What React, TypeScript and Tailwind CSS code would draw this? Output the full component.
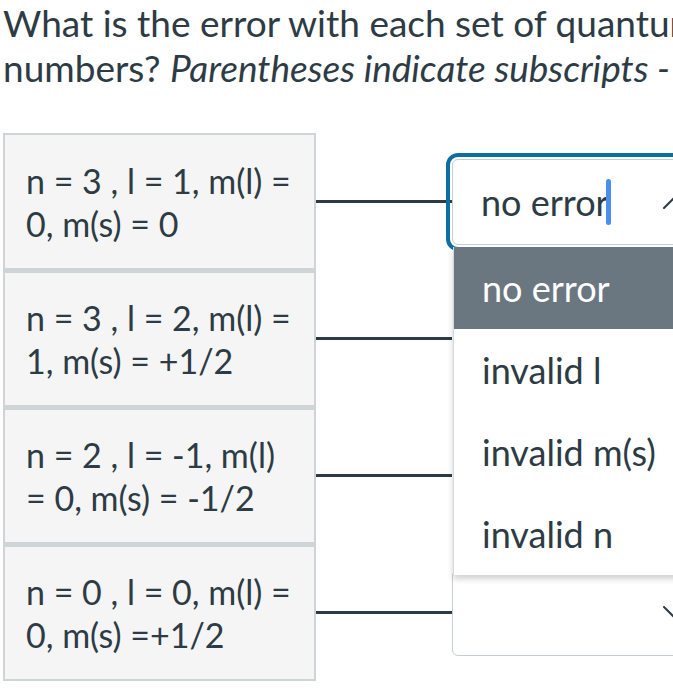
import React from 'react';

type Row = { lines: [string, string]; hasSelect: boolean; focused?: boolean };

const ROWS: Row[] = [
  { lines: ['n = 3 , l = 1, m(l) =', '0, m(s) = 0'], hasSelect: true, focused: true },
  { lines: ['n = 3 , l = 2, m(l) =', '1, m(s) = +1/2'], hasSelect: false },
  { lines: ['n = 2 , l = -1, m(l)', '= 0, m(s) = -1/2'], hasSelect: false },
  { lines: ['n = 0 , l = 0, m(l) =', '0, m(s) =+1/2'], hasSelect: true },
];

const OPTIONS = ['no error', 'invalid l', 'invalid m(s)', 'invalid n'];

const Chevron: React.FC<{ up?: boolean }> = ({ up }) => (
  <svg
    width="24"
    height="14"
    viewBox="0 0 24 14"
    className="absolute left-[210px] top-1/2 -translate-y-1/2"
    fill="none"
    stroke="#2d3b45"
    strokeWidth="2"
    strokeLinecap="round"
  >
    {up ? <path d="M1 13 L12 2 L23 13" /> : <path d="M1 1 L12 12 L23 1" />}
  </svg>
);

const Dropdown: React.FC = () => (
  <div className="absolute left-0 top-[calc(100%+3px)] w-[300px] bg-white border-l border-[#d5d9dc] shadow-[0_4px_6px_rgba(0,0,0,0.18)] z-10">
    {OPTIONS.map((opt, i) => (
      <div
        key={opt}
        className={`h-[82px] flex items-center pl-[28px] text-[36px] ${
          i === 0 ? 'bg-[#6b7780] text-white' : 'text-[#2d3b45]'
        }`}
      >
        {opt}
      </div>
    ))}
  </div>
);

const SelectBox: React.FC<{ focused?: boolean }> = ({ focused }) => (
  <div
    className={`relative w-[300px] h-[86px] bg-white border border-[#c7cdd1] rounded-[6px] flex items-center pl-[28px] text-[36px] ${
      focused ? 'outline-[4px] outline-solid outline-[#0b6fa4] outline-offset-[2px]' : ''
    }`}
  >
    {focused && (
      <>
        <span>no error</span>
        <span className="inline-block w-[5px] h-[46px] rounded-full bg-[#4a8ff0] -ml-[3px]" />
      </>
    )}
    <Chevron up={focused} />
    {focused && <Dropdown />}
  </div>
);

export default function App() {
  return (
    <div className="w-[673px] h-[700px] overflow-hidden bg-white text-[#2d3b45] font-['Lato',_'Liberation_Sans',_sans-serif]">
      <div className="w-[1000px]">
        <p className="pl-[3px] text-[37px] leading-[45px] whitespace-nowrap">
          What is the error with each set of quantum
          <br />
          numbers? <em>Parentheses indicate subscripts - so m(l) is</em>
        </p>

        <div className="mt-[43px] ml-[3px] flex flex-col">
          {ROWS.map((row, i) => (
            <div key={i} className="flex items-center">
              <div
                className={`w-[313px] h-[137px] bg-[#f5f5f5] border-2 border-[#cfd4d7] ${
                  i > 0 ? 'border-t-[3px]' : ''
                } flex flex-col justify-center pl-[21px] text-[34px] leading-[43px]`}
              >
                <span>{row.lines[0]}</span>
                <span>{row.lines[1]}</span>
              </div>
              <div className="w-[136px] h-[3px] bg-[#2d3b45]" />
              {row.hasSelect ? <SelectBox focused={row.focused} /> : <div className="w-[300px]" />}
            </div>
          ))}
        </div>
      </div>
    </div>
  );
}
